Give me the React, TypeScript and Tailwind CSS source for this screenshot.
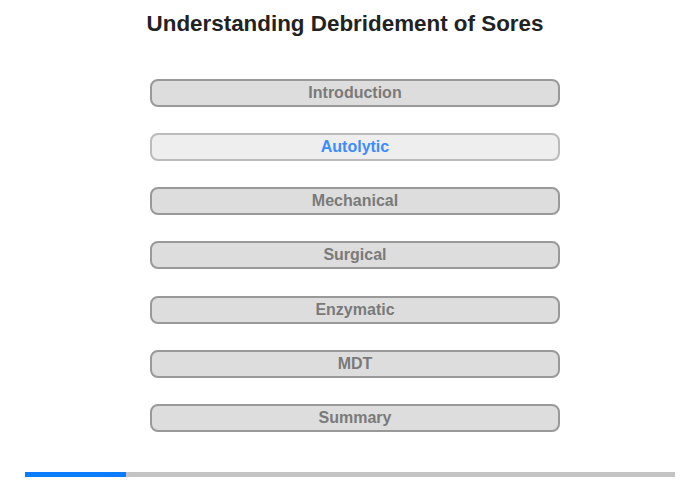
import React from 'react';

const sections = ['Introduction', 'Autolytic', 'Mechanical', 'Surgical', 'Enzymatic', 'MDT', 'Summary'];

const App = () => {
  const active = 1;

  return (
    <div className="w-[700px] h-[480px] bg-white font-['Liberation_Sans',Arial,sans-serif] relative">
      <h1 className="pt-[11px] pr-[10px] text-center text-[22.4px] leading-[26px] font-bold text-[#222]">
        Understanding Debridement of Sores
      </h1>

      <div className="mt-[42px] flex flex-col items-center gap-[26.17px] pl-[10px]">
        {sections.map((s, i) => (
          <button
            key={s}
            className={`w-[410px] h-[28px] rounded-[8px] border-2 text-[16px] font-bold leading-none ${
              i === active
                ? 'bg-[#eeeeee] border-[#bbbbbb] text-[#3b8cff]'
                : 'bg-[#dddddd] border-[#999999] text-[#7a7a7a]'
            }`}
          >
            {s}
          </button>
        ))}
      </div>

      <div className="absolute left-[25px] top-[472px] w-[650px] h-[5px] bg-[#c4c4c4]">
        <div className="w-[101px] h-full bg-[#0a7cff]" />
      </div>
    </div>
  );
};

export default App;
